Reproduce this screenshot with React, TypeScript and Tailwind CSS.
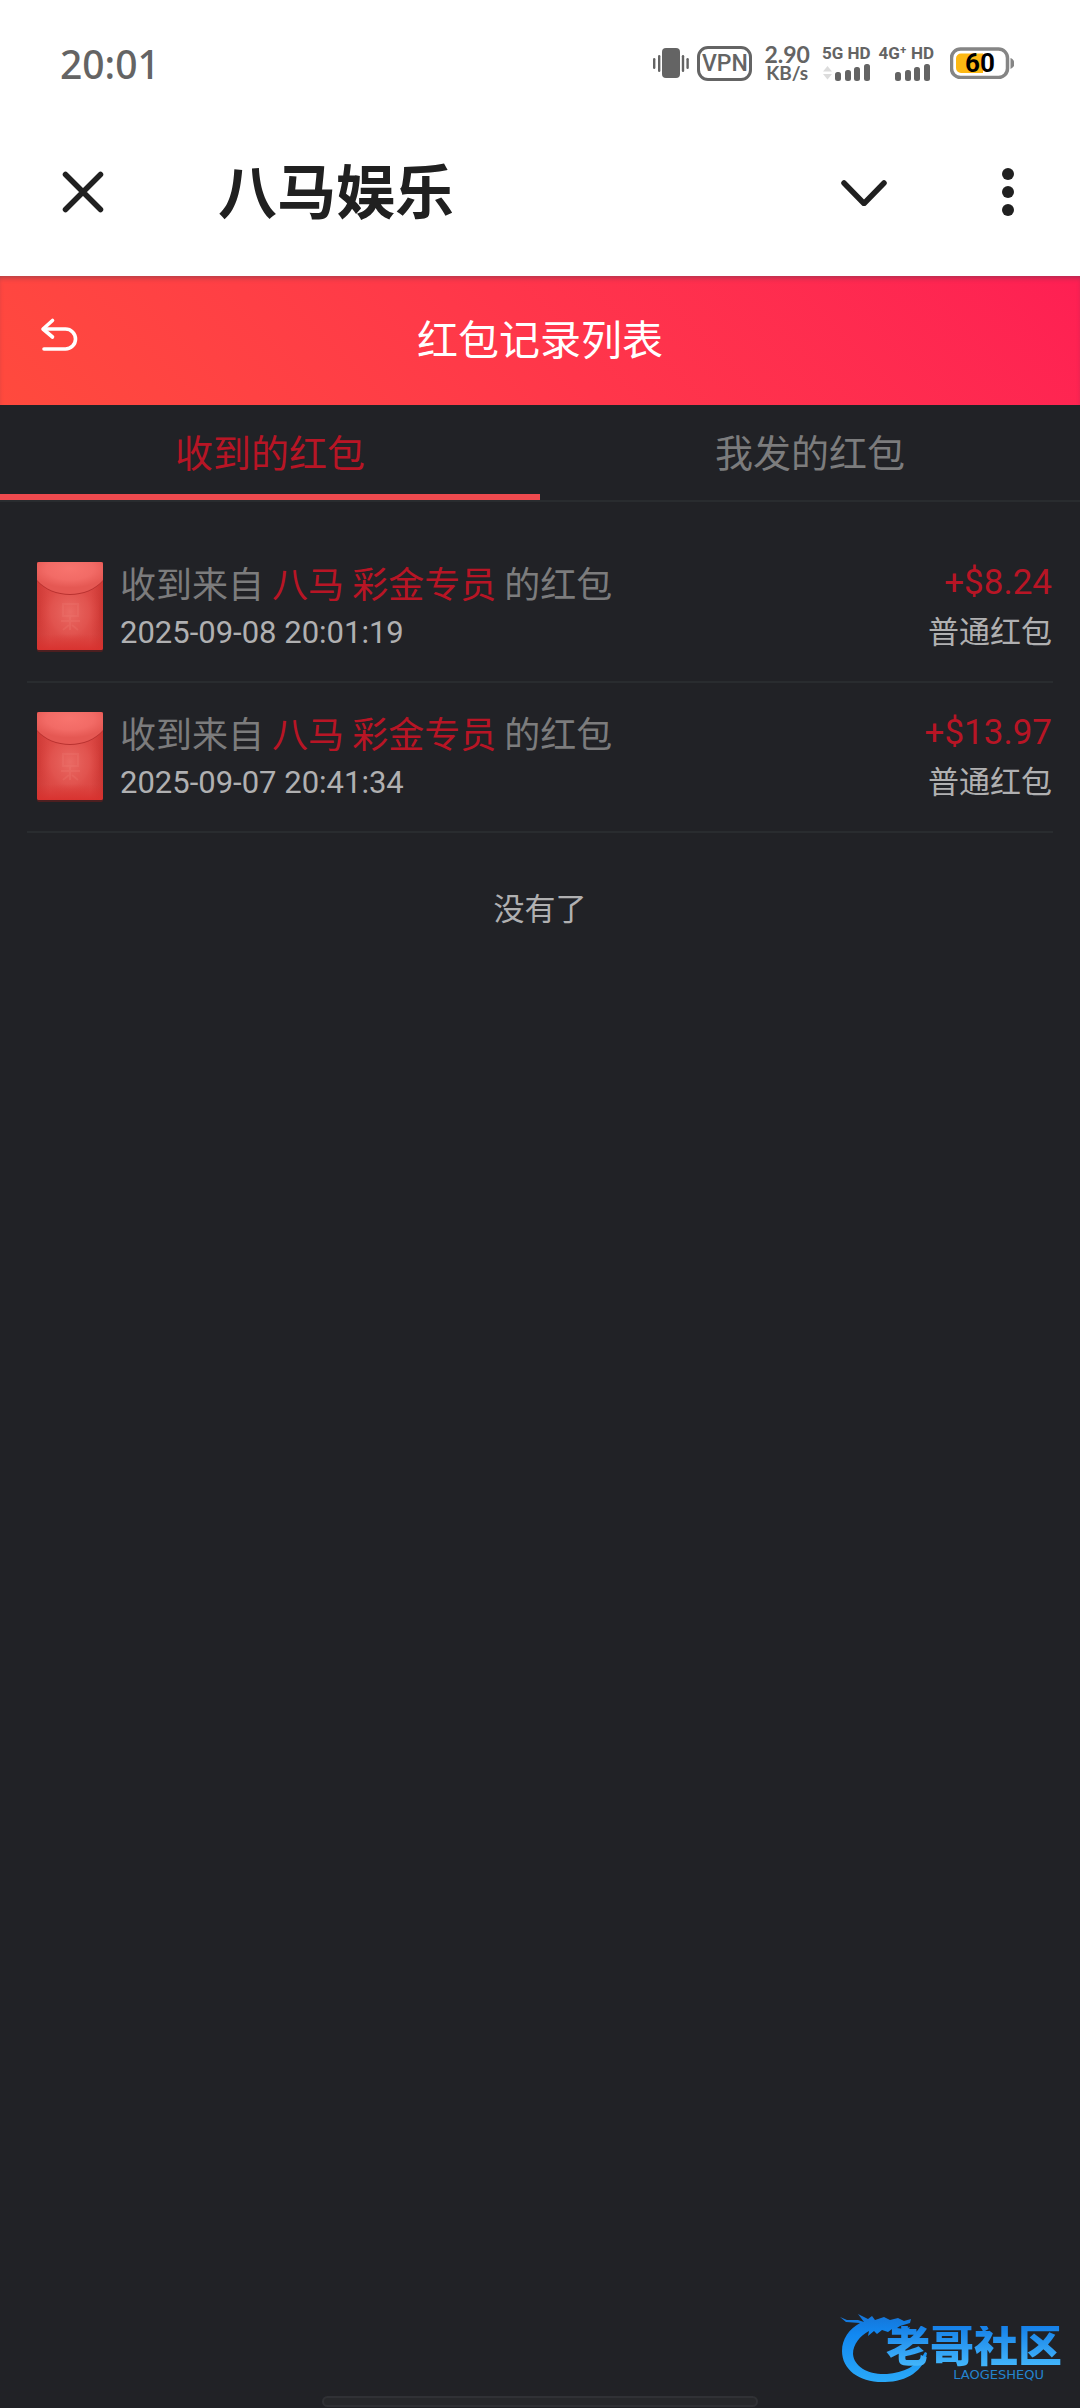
import React, { useState } from "react";

type Packet = {
  id: number;
  sender: string;
  time: string;
  amount: string;
  kind: string;
};

const received: Packet[] = [
  { id: 1, sender: "八马 彩金专员", time: "2025-09-08 20:01:19", amount: "+$8.24", kind: "普通红包" },
  { id: 2, sender: "八马 彩金专员", time: "2025-09-07 20:41:34", amount: "+$13.97", kind: "普通红包" },
];

const tabs = ["收到的红包", "我发的红包"];

function VibrateIcon() {
  return (
    <svg width="36" height="32" viewBox="0 0 36 32" fill="#646464" aria-hidden="true">
      <rect x="9" y="1" width="18" height="30" rx="4" />
      <rect x="5" y="8" width="2.4" height="17" rx="1.2" />
      <rect x="0" y="11" width="2.4" height="11" rx="1.2" />
      <rect x="28.8" y="8" width="2.4" height="17" rx="1.2" />
      <rect x="33.4" y="11" width="2.4" height="11" rx="1.2" />
    </svg>
  );
}

function Signal({ arrows = false }: { arrows?: boolean }) {
  return (
    <svg width="48" height="17" viewBox="0 0 48 17" fill="#646464" aria-hidden="true">
      {arrows && (
        <g fill="#dcdcdc">
          <path d="M1 7.5 5.5 2 10 7.5z" />
          <path d="M1 10 5.5 15.500 10 10z" />
        </g>
      )}
      <rect x="13" y="8" width="6" height="9" rx="2.500" />
      <rect x="23" y="6" width="6" height="11" rx="2.500" />
      <rect x="32" y="3" width="6" height="14" rx="2.500" />
      <rect x="42" y="0" width="6" height="17" rx="2.500" />
    </svg>
  );
}

function Battery() {
  return (
    <div className="relative flex h-8 w-16 items-center">
      <svg width="64" height="32" viewBox="0 0 64 32" fill="none" aria-hidden="true">
        <rect x="1.500" y="2" width="56" height="28.500" rx="9" stroke="#858585" strokeWidth="3.500" />
        <path d="M11 6.500H33V26H11a5 5 0 0 1-5-5v-9.500a5 5 0 0 1 5-5z" fill="#fdb813" />
        <path d="M60.500 11v11c2.500-1 4-3 4-5.500s-1.500-4.500-4-5.500z" fill="#858585" />
      </svg>
      <span className="absolute inset-y-0 left-0 flex w-15 items-center justify-center font-['Roboto'] text-[26px] font-bold leading-none text-black">
        60
      </span>
    </div>
  );
}

function StatusBar() {
  return (
    <div className="flex h-27 items-center justify-between pt-4.5 pr-[66px] pl-15 text-[#646464]">
      <time className="font-['Noto_Sans','Open_Sans',sans-serif] text-[39px] font-medium leading-none">20:01</time>
      <div className="flex items-center">
        <VibrateIcon />
        <span className="ml-2 flex h-[35px] w-[55px] items-center justify-center rounded-[11px] border-3 border-[#646464] font-['Roboto',sans-serif] text-[23px] font-medium leading-none">
          VPN
        </span>
        <span className="ml-3 flex flex-col items-center font-['Lato',sans-serif] font-bold">
          <span className="text-[23px] leading-[19px]">2.90</span>
          <span className="text-[19px] leading-[18px]">KB/s</span>
        </span>
        <span className="ml-3 flex flex-col items-center gap-1 font-['Roboto',sans-serif] text-[17px] font-bold leading-[14px]">
          5G HD
          <Signal arrows />
        </span>
        <span className="ml-2 flex flex-col items-center gap-1 font-['Roboto',sans-serif] text-[17px] font-bold leading-[14px]">
          4G⁺ HD
          <Signal />
        </span>
        <span className="ml-4">
          <Battery />
        </span>
      </div>
    </div>
  );
}

function AppBar() {
  return (
    <header className="flex h-42 items-center pr-12 pl-[55px] text-[#202020]">
      <button type="button" aria-label="关闭" className="flex size-14 items-center justify-center">
        <svg width="44" height="44" viewBox="0 0 44 44" stroke="currentColor" strokeWidth="5.500" strokeLinecap="round">
          <path d="M4.500 4.500 39.500 39.500M39.500 4.500 4.500 39.500" />
        </svg>
      </button>
      <h1 className="ml-[107px] grow pt-0.5 text-[59px] font-bold leading-none">八马娱乐</h1>
      <button type="button" aria-label="展开" className="flex size-14 items-center justify-center">
        <svg width="48" height="28" viewBox="0 0 48 28" fill="none" stroke="currentColor" strokeWidth="5.500" strokeLinecap="round" strokeLinejoin="round">
          <path d="M4 5 24 25.500 44 5" />
        </svg>
      </button>
      <button type="button" aria-label="更多" className="ml-[92px] flex h-14 w-12 items-center justify-center">
        <svg width="12" height="48" viewBox="0 0 12 48" fill="currentColor">
          <circle cx="6" cy="6" r="6" />
          <circle cx="6" cy="24" r="6" />
          <circle cx="6" cy="42" r="6" />
        </svg>
      </button>
    </header>
  );
}

function TitleBar() {
  return (
    <div className="grid h-[129px] grid-cols-[1fr_auto_1fr] items-center bg-linear-45 from-[#ff4a3d] via-[#ff364a] to-[#fe1f53] px-[35px] text-white shadow-[inset_0_4px_5px_-2px_rgba(60,60,80,0.4)]">
      <button type="button" aria-label="返回" className="mb-3 flex size-12 items-center justify-center">
        <svg width="38" height="36" viewBox="0 0 38 36" fill="none" stroke="currentColor" strokeWidth="3.600" strokeLinecap="round" strokeLinejoin="round">
          <path d="M12.500 3.500 3 12 12.500 20" />
          <path d="M4 12H25.500a10 10 0 0 1 0 20H4" />
        </svg>
      </button>
      <h2 className="pt-0.5 text-[41px] leading-none">红包记录列表</h2>
    </div>
  );
}

function Envelope() {
  return (
    <svg width="66" height="90" viewBox="0 0 66 90" className="shrink-0" aria-hidden="true">
      <defs>
        <linearGradient id="env-side" x1="0" x2="1" y1="0" y2="0">
          <stop offset="0" stopColor="#cf3a36" />
          <stop offset="0.2" stopColor="#dc4a46" />
          <stop offset="0.8" stopColor="#dc4a46" />
          <stop offset="1" stopColor="#cb3632" />
        </linearGradient>
        <radialGradient id="env-glow" cx="0.5" cy="0.5" r="0.55">
          <stop offset="0" stopColor="#ea6a64" />
          <stop offset="0.6" stopColor="#e25550" stopOpacity="0.8" />
          <stop offset="1" stopColor="#d9403b" stopOpacity="0" />
        </radialGradient>
        <radialGradient id="env-flap" cx="0.5" cy="0.2" r="0.6">
          <stop offset="0" stopColor="#f8746e" />
          <stop offset="0.6" stopColor="#f26b66" />
          <stop offset="1" stopColor="#e55853" />
        </radialGradient>
        <linearGradient id="env-base" x1="0" x2="0" y1="0" y2="1">
          <stop offset="0" stopColor="#d8302d" stopOpacity="0" />
          <stop offset="1" stopColor="#d8302d" stopOpacity="0.9" />
        </linearGradient>
      </defs>
      <rect x="0" y="3" width="66" height="87" rx="2" fill="#4d1f20" />
      <rect width="66" height="88" rx="2" fill="url(#env-side)" />
      <rect x="4" y="16" width="58" height="68" fill="url(#env-glow)" />
      <rect y="72" width="66" height="16" rx="2" fill="url(#env-base)" />
      <g fill="none" stroke="#ee7a74" strokeWidth="2" opacity="0.25">
        <path d="M26 42h15v12H26zM24 59h19M33 54v14M26 68l6-5M41 68l-6-5" />
      </g>
      <path d="M0 2a2 2 0 0 1 2-2h62a2 2 0 0 1 2 2v17C58 28 46 33 33 33S8 28 0 19z" fill="#b93230" />
      <path d="M0 2a2 2 0 0 1 2-2h62a2 2 0 0 1 2 2v16C58 27 46 32 33 32S8 27 0 18z" fill="url(#env-flap)" />
    </svg>
  );
}

function PacketRow({ packet }: { packet: Packet }) {
  return (
    <li className="flex items-start border-b-2 border-[#292c2f] pt-[29px] pr-px pb-[27px] pl-2.5">
      <Envelope />
      <div className="ml-[17px] grow">
        <p className="font-['Noto_Sans_CJK_SC',sans-serif] text-[36px] leading-[40px] text-[#7c7c7d]">
          收到来自 <span className="text-[#b81525]">{packet.sender}</span> 的红包
        </p>
        <time className="mt-2.5 block text-[31px] leading-[42px] text-[#b0b0b1]">{packet.time}</time>
      </div>
      <div className="text-right">
        <p className="text-[35px] leading-[42px] text-[#b81525]">{packet.amount}</p>
        <p className="mt-2 text-[31px] leading-[42px] text-[#b0b0b1]">{packet.kind}</p>
      </div>
    </li>
  );
}

function Watermark() {
  return (
    <div className="relative mr-[18px] h-20 w-56">
      <svg width="100" height="76" viewBox="0 0 100 76" aria-hidden="true">
        <defs>
          <linearGradient id="dragon" x1="0" x2="0" y1="0" y2="1">
            <stop offset="0" stopColor="#1674d6" />
            <stop offset="0.3" stopColor="#1188f2" />
            <stop offset="1" stopColor="#2aa9f8" />
          </linearGradient>
        </defs>
        <path
          fill="url(#dragon)"
          d="M2 7 9 10 20 10 26 12 20 4 30 9 34 6 37 10 46 7 52 10 60 8 66 11 73 9 72 13 62 16 59 18 66 19 72 17 70 22 60 22 54 19 50 22 44 20 39 24 36 21 30 26 31 21C22 26 15 34 15 44c1 13 16 21 34 20 16-1 31-8 38-22l2 1C86 60 69 72 47 72 22 73 4 60 4 41 4 29 11 19 22 13L8 12z"
        />
      </svg>
      <div className="absolute top-4 right-0 flex flex-col items-end">
        <span className="bg-linear-to-b from-[#1580e8] to-[#45b8fb] bg-clip-text text-[44px] font-black leading-[42px] text-transparent">
          老哥社区
        </span>
        <span className="mr-4.5 font-['DejaVu_Sans',sans-serif] text-[13px] leading-[14px] text-[#2484cf]">LAOGESHEQU</span>
      </div>
    </div>
  );
}

export default function App() {
  const [active, setActive] = useState(0);

  return (
    <div className="flex min-h-screen flex-col bg-[#212226] font-['Roboto','Noto_Sans_CJK_SC',sans-serif]">
      <div className="bg-white">
        <StatusBar />
        <AppBar />
      </div>
      <TitleBar />
      <div role="tablist" className="grid grid-cols-2 border-b-2 border-[#292c2f]">
        {tabs.map((label, i) => (
          <button
            key={label}
            type="button"
            role="tab"
            aria-selected={active === i}
            onClick={() => setActive(i)}
            className={
              active === i
                ? "h-[95px] border-b-6 border-[#ee4a4e] pt-2 text-[38px] leading-none text-[#b81525]"
                : "h-[95px] border-b-6 border-transparent pt-2 text-[38px] leading-none text-[#7c7c7d]"
            }
          >
            {label}
          </button>
        ))}
      </div>
      <main className="px-[27px] pt-[31px]">
        <ul>
          {received.map((p) => (
            <PacketRow key={p.id} packet={p} />
          ))}
        </ul>
        <p className="mt-14 text-center text-[31px] leading-[42px] text-[#b0b0b1]">没有了</p>
      </main>
      <footer className="mt-auto flex flex-col">
        <div className="mb-1.5 flex justify-end">
          <Watermark />
        </div>
        <div className="mb-px h-[11px] w-[436px] self-center rounded-full border-2 border-[#303135] bg-[#27282b]" />
      </footer>
    </div>
  );
}
